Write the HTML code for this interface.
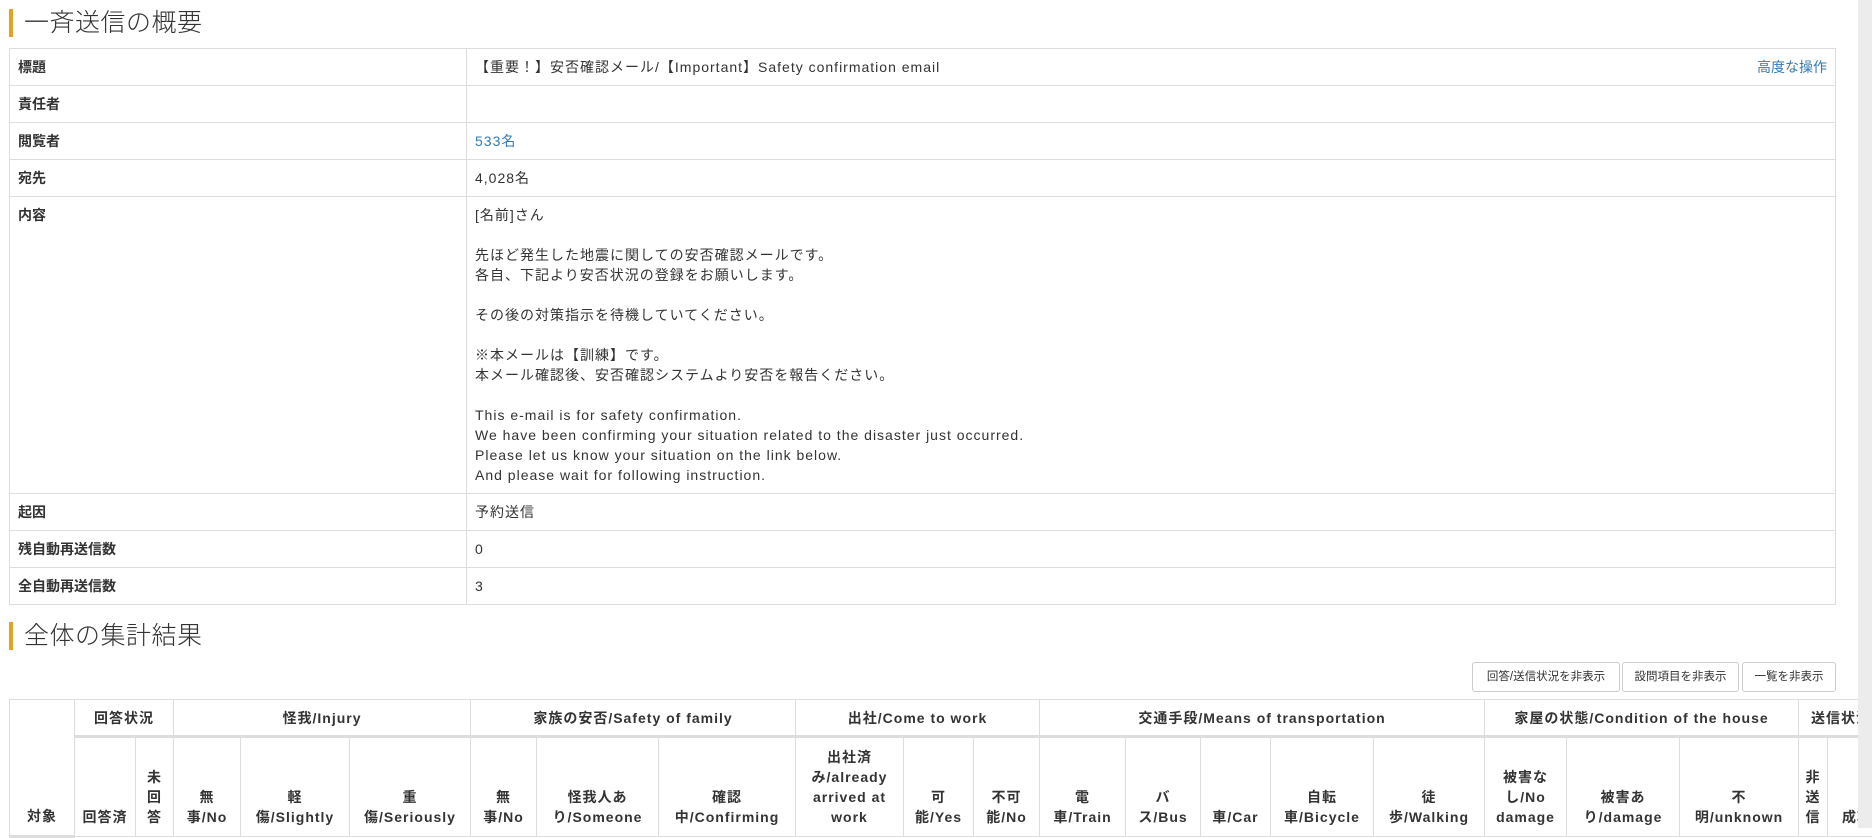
<!DOCTYPE html>
<html><head><meta charset="utf-8">
<style>
*{box-sizing:border-box;margin:0;padding:0}
html,body{width:1872px;height:828px;overflow:hidden;background:#fff;color:#333;font-family:"Liberation Sans","Noto Sans CJK JP",sans-serif;font-size:14px}
.h{position:absolute;left:9px;border-left:4px solid #e8a020;padding-left:11px;font-size:25px;font-weight:300;line-height:28px;letter-spacing:0.5px;color:#333}
table{border-collapse:collapse;table-layout:fixed}
#t1{position:absolute;left:9px;top:48px;width:1827px;letter-spacing:1px}
#t1 td{border:1px solid #ddd;padding:8px 8px;line-height:20px;vertical-align:top;height:37px}
#t1 td.l{width:457px;font-weight:bold;letter-spacing:0}
a{color:#337ab7;text-decoration:none}
.btn{position:absolute;top:662px;height:30px;border:1px solid #ccc;border-radius:3px;background:#fff;font-size:11.5px;line-height:28px;text-align:center;color:#333}
#t2{position:absolute;left:9px;top:699px;font-weight:bold;letter-spacing:1px;white-space:nowrap}
#t2 th{border:1px solid #ddd;text-align:center;font-weight:bold;line-height:20px;padding:0 2px;overflow:visible}
#t2 tr.r1 th{height:37px;border-bottom:3px solid #ddd;vertical-align:middle}
#t2 tr.r2 th{height:100px;vertical-align:bottom;padding-bottom:9px}
#sb{position:absolute;left:1858px;top:0;width:14px;height:828px;background:#ececec}
</style></head><body>
<div class="h" style="top:9px">一斉送信の概要</div>
<table id="t1">
<tr><td class="l">標題</td><td>【重要！】安否確認メール/【Important】Safety confirmation email<span style="float:right;letter-spacing:0"><a>高度な操作</a></span></td></tr>
<tr><td class="l">責任者</td><td></td></tr>
<tr><td class="l">閲覧者</td><td><a>533名</a></td></tr>
<tr><td class="l">宛先</td><td>4,028名</td></tr>
<tr><td class="l">内容</td><td>[名前]さん<br><br>先ほど発生した地震に関しての安否確認メールです。<br>各自、下記より安否状況の登録をお願いします。<br><br>その後の対策指示を待機していてください。<br><br>※本メールは【訓練】です。<br>本メール確認後、安否確認システムより安否を報告ください。<br><br>This e-mail is for safety confirmation.<br>We have been confirming your situation related to the disaster just occurred.<br>Please let us know your situation on the link below.<br>And please wait for following instruction.</td></tr>
<tr><td class="l">起因</td><td>予約送信</td></tr>
<tr><td class="l">残自動再送信数</td><td>0</td></tr>
<tr><td class="l">全自動再送信数</td><td>3</td></tr>
</table>
<div class="h" style="top:622px">全体の集計結果</div>
<div class="btn" style="left:1472px;width:148px">回答/送信状況を非表示</div>
<div class="btn" style="left:1622px;width:117px">設問項目を非表示</div>
<div class="btn" style="left:1742px;width:94px">一覧を非表示</div>
<table id="t2" style="width:1900px">
<colgroup>
<col style="width:65px"><col style="width:61px"><col style="width:38px"><col style="width:67px"><col style="width:109px"><col style="width:121px"><col style="width:66px"><col style="width:122px"><col style="width:137px"><col style="width:108px"><col style="width:70px"><col style="width:66px"><col style="width:86px"><col style="width:75px"><col style="width:70px"><col style="width:103px"><col style="width:111px"><col style="width:82px"><col style="width:113px"><col style="width:119px"><col style="width:29px"><col style="width:97px">
</colgroup>
<tr class="r1">
<th rowspan="2" style="vertical-align:bottom;padding-bottom:9px">対象</th>
<th colspan="2">回答状況</th>
<th colspan="3">怪我/Injury</th>
<th colspan="3">家族の安否/Safety of family</th>
<th colspan="3">出社/Come to work</th>
<th colspan="5">交通手段/Means of transportation</th>
<th colspan="3">家屋の状態/Condition of the house</th>
<th colspan="2" style="text-align:left;padding-left:12px">送信状況</th>
</tr>
<tr class="r2">
<th>回答済</th>
<th>未<br>回<br>答</th>
<th>無<br>事/No</th>
<th>軽<br>傷/Slightly</th>
<th>重<br>傷/Seriously</th>
<th>無<br>事/No</th>
<th>怪我人あ<br>り/Someone</th>
<th>確認<br>中/Confirming</th>
<th>出社済<br>み/already<br>arrived at<br>work</th>
<th>可<br>能/Yes</th>
<th>不可<br>能/No</th>
<th>電<br>車/Train</th>
<th>バ<br>ス/Bus</th>
<th>車/Car</th>
<th>自転<br>車/Bicycle</th>
<th>徒<br>歩/Walking</th>
<th>被害な<br>し/No<br>damage</th>
<th>被害あ<br>り/damage</th>
<th>不<br>明/unknown</th>
<th>非<br>送<br>信</th>
<th style="text-align:left;padding-left:14px">成功</th>
</tr>
</table>
<div id="sb"></div>
</body></html>
